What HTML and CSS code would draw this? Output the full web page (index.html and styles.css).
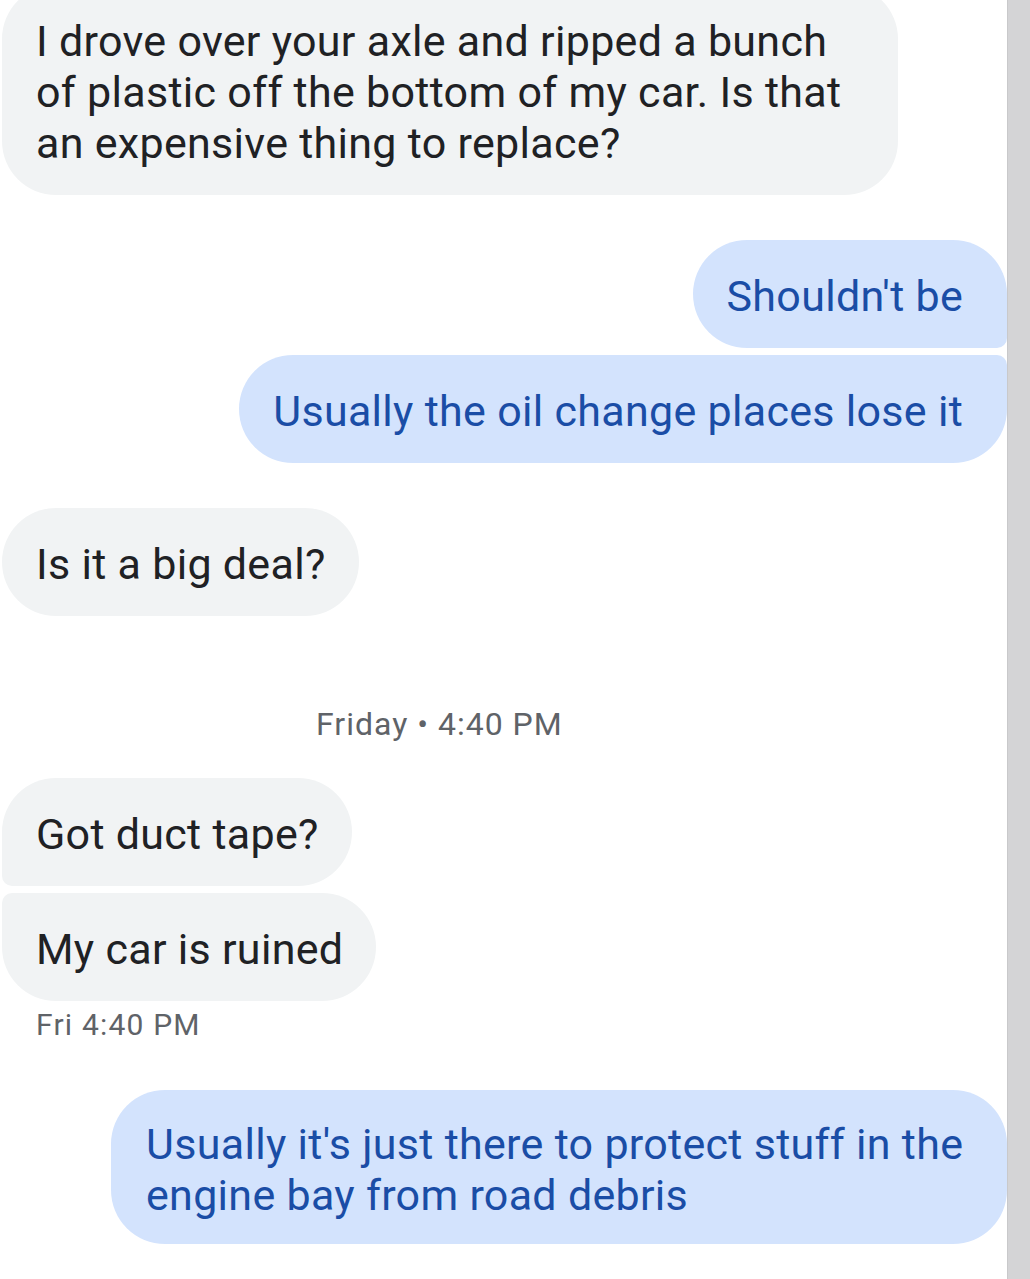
FILE: index.html
```html
<!DOCTYPE html>
<html lang="en">
<head>
<meta charset="utf-8">
<title>Messages</title>
<link rel="stylesheet" href="styles.css">
</head>
<body>
<div class="screen">
  <div class="chat">
    <div class="bubble in first-msg">I drove over your axle and ripped a bunch of plastic off the bottom of my car. Is that an expensive thing to replace?</div>

    <div class="bubble out group-top gap-lg">Shouldn't be</div>
    <div class="bubble out group-bottom gap-sm">Usually the oil change places lose it</div>

    <div class="bubble in gap-lg">Is it a big deal?</div>

    <div class="day-stamp">Friday • 4:40 PM</div>

    <div class="bubble in in-top gap-md">Got duct tape?</div>
    <div class="bubble in in-bottom gap-sm">My car is ruined</div>
    <div class="msg-time">Fri 4:40 PM</div>

    <div class="bubble out last-msg">Usually it's just there to protect stuff in the engine bay from road debris</div>
  </div>
  <div class="scrollbar"></div>
</div>
</body>
</html>
```
FILE: styles.css
```css
html, body {
  margin: 0;
  padding: 0;
  background: #ffffff;
}
body {
  font-family: Roboto, "Noto Sans", "Liberation Sans", sans-serif;
  overflow: hidden;
}
.screen {
  display: flex;
  min-height: 1279px;
}
.chat {
  width: 1008px;
  display: flex;
  flex-direction: column;
  padding: 0 0 0 2px;
  box-sizing: border-box;
}
.scrollbar {
  width: 22px;
  background: #d4d4d6;
  border-left: 1px solid #c9c9cb;
}
.bubble {
  font-size: 43px;
  letter-spacing: 0.3px;
  line-height: 51px;
  padding: 31px 33px 26px 34px;
  border-radius: 54px;
  max-width: 896px;
  box-sizing: border-box;
}
.in {
  align-self: flex-start;
  background: #f1f3f4;
  color: #202124;
}
.out {
  align-self: flex-end;
  background: #d3e3fd;
  color: #1a4da6;
  padding-right: 44px;
}
.first-msg {
  margin-top: -15px;
  width: 896px;
}
.gap-lg { margin-top: 45px; }
.gap-md { margin-top: 34px; }
.gap-sm { margin-top: 7px; }
.group-top { border-bottom-right-radius: 10px; }
.group-bottom { border-top-right-radius: 10px; }
.in-top { border-bottom-left-radius: 10px; }
.in-bottom { border-top-left-radius: 10px; }
.day-stamp {
  margin-top: 88px;
  padding-left: 314px;
  font-size: 32px;
  letter-spacing: 1px;
  line-height: 40px;
  color: #5f6368;
}
.msg-time {
  margin-top: 6px;
  padding-left: 34px;
  font-size: 30px;
  letter-spacing: 1.2px;
  line-height: 36px;
  color: #5f6368;
}
.last-msg {
  margin-top: 47px;
  width: 897px;
  padding: 29px 24px 23px 35px;
}
```
